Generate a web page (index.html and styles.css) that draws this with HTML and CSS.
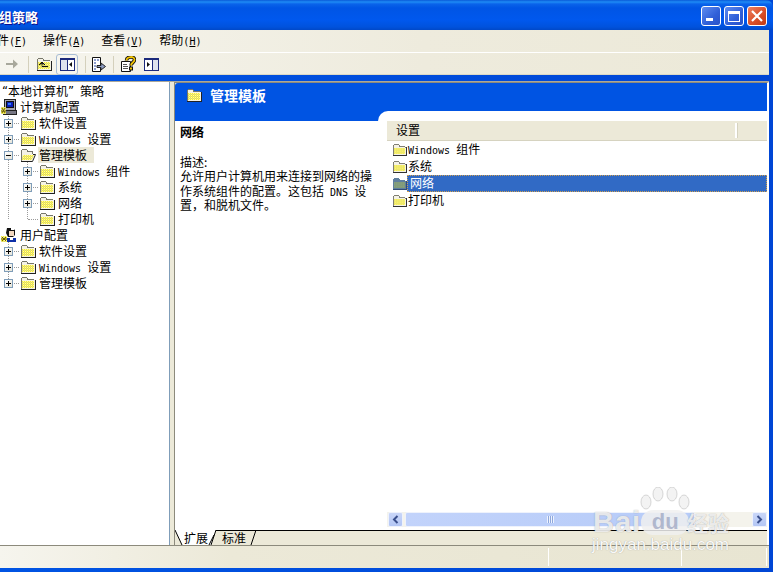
FILE: index.html
```html
<!DOCTYPE html>
<html lang="zh-CN">
<head>
<meta charset="utf-8">
<title>组策略</title>
<link rel="stylesheet" href="styles.css">
</head>
<body>
<svg class="defs" xmlns="http://www.w3.org/2000/svg">
  <defs>
    <pattern id="dither" width="2" height="2" patternUnits="userSpaceOnUse">
      <rect width="2" height="2" fill="#f6ee30"/>
      <rect width="1" height="1" fill="#d9d6a8"/>
      <rect x="1" y="1" width="1" height="1" fill="#fff9a0"/>
    </pattern>
    <pattern id="ditherSel" width="2" height="2" patternUnits="userSpaceOnUse">
      <rect width="2" height="2" fill="#7f9a78"/>
      <rect width="1" height="1" fill="#8fa585"/>
    </pattern>
    <symbol id="folder" viewBox="0 0 16 14">
      <path d="M1 3V2H2V1H7V2H8V3H14V4H15V13H1Z" fill="#f4f2e6" shape-rendering="crispEdges"/>
      <path d="M2 5H14V12H2Z" fill="url(#dither)" shape-rendering="crispEdges"/>
      <path d="M1.5 13V2.5L2.5 1.5H6.5L7.5 2.5V3.5H13.5L14.5 4.5" fill="none" stroke="#77776a" shape-rendering="crispEdges"/>
      <path d="M1 13.5H15.5M15.5 14V4" stroke="#222" fill="none" shape-rendering="crispEdges"/>
    </symbol>
    <symbol id="folderSel" viewBox="0 0 16 14">
      <path d="M1 3V2H2V1H7V2H8V3H14V4H15V13H1Z" fill="#5f7f9f" shape-rendering="crispEdges"/>
      <path d="M2 5H14V12H2Z" fill="url(#ditherSel)" shape-rendering="crispEdges"/>
      <path d="M1 13.5H15.5M15.5 14V4" stroke="#24406c" fill="none" shape-rendering="crispEdges"/>
    </symbol>
    <symbol id="folderOpen" viewBox="0 0 16 14">
      <path d="M1 12V2H2V1H7V2H8V3H13V6H15L12 13H2Z" fill="#f4f2e6" shape-rendering="crispEdges"/>
      <path d="M3 7H14L11.5 12H1.5Z" fill="url(#dither)"/>
      <path d="M1.5 13V2.5L2.5 1.5H6.5L7.5 2.5V3.5H12.5V6" fill="none" stroke="#77776a" shape-rendering="crispEdges"/>
      <path d="M1 13.5H12.5L15.5 6.5H13" stroke="#222" fill="none"/>
    </symbol>
    <symbol id="computer" viewBox="0 0 16 16">
      <rect x="3.5" y="0.5" width="11" height="11" fill="#a8a8b4" stroke="#222"/>
      <rect x="5.5" y="2.5" width="7" height="6" fill="#0a1fb8" stroke="#111"/>
      <rect x="7" y="4" width="3" height="2" fill="#2f7bff"/>
      <rect x="2.5" y="11.5" width="13" height="4" fill="#777784" stroke="#222"/>
      <path d="M0 8H5V15H0Z" fill="url(#dither)"/>
      <path d="M1 9L4 14M4 9L1 14M0 12H5" stroke="#6b5c00"/>
    </symbol>
    <symbol id="user" viewBox="0 0 16 16">
      <path d="M6 1H11L14 3V8L12 10H7L5 6Z" fill="#111"/>
      <rect x="8" y="4" width="5" height="5" fill="#f2d8c0"/>
      <rect x="10" y="1" width="3" height="2" fill="#fff"/>
      <path d="M5 11H15V15H5Z" fill="#0d2fa8"/>
      <rect x="9" y="10" width="3" height="3" fill="#fff"/>
      <path d="M0 9H6V15H0Z" fill="url(#dither)"/>
      <path d="M1 10L5 14M5 10L1 14M0 12H6" stroke="#6b5c00"/>
    </symbol>
  </defs>
</svg>

<div class="window">
  <header class="titlebar">
    <span class="title">组策略</span>
    <div class="controls">
      <span class="ctl ctl-blue"><svg width="20" height="20" viewBox="0 0 20 20"><rect x="5" y="12" width="7" height="3" fill="#fff"/></svg></span>
      <span class="ctl ctl-blue"><svg width="20" height="20" viewBox="0 0 20 20"><path d="M4.5 5.5H15.5V15.5H4.5Z" fill="none" stroke="#fff" shape-rendering="crispEdges"/><rect x="4" y="5" width="12" height="3" fill="#fff"/></svg></span>
      <span class="ctl ctl-red"><svg width="20" height="20" viewBox="0 0 20 20"><path d="M5 5L15 15M15 5L5 15" stroke="#fff" stroke-width="2.2"/></svg></span>
    </div>
  </header>

  <nav class="menubar">
    <span class="menu menu-first">文件<span class="lat">(<u>F</u>)</span></span>
    <span class="menu">操作<span class="lat">(<u>A</u>)</span></span>
    <span class="menu">查看<span class="lat">(<u>V</u>)</span></span>
    <span class="menu">帮助<span class="lat">(<u>H</u>)</span></span>
  </nav>

  <div class="toolbar">
    <span class="tool">
      <svg width="14" height="12" viewBox="0 0 14 12"><path d="M1 5H8V1.5L13 6L8 10.5V7H1Z" fill="#a8a89c"/></svg>
    </span>
    <span class="sep sep-a"></span>
    <span class="tool tool-up">
      <svg width="16" height="14" viewBox="0 0 16 14"><use href="#folder" width="16" height="14"/><path d="M3 8L6 5L9 8M6 8.5V9.5H12" fill="none" stroke="#111"/><path d="M4 7.5H8L6 5.5Z" fill="#111"/></svg>
    </span>
    <span class="tool tool-active">
      <svg width="15" height="13" viewBox="0 0 15 13"><rect x="0.5" y="0.5" width="14" height="12" fill="#fff" stroke="#1c2a7c"/><rect width="15" height="2" fill="#1c2a7c"/><rect x="7" y="0" width="1" height="13" fill="#1c2a7c"/><rect x="1" y="2" width="6" height="10" fill="#dfe3ee"/><path d="M12 4V9L9 6.5Z" fill="#111"/></svg>
    </span>
    <span class="sep sep-b"></span>
    <span class="tool tool-export">
      <svg width="15" height="15" viewBox="0 0 15 15"><path d="M1.5 .5H9.5V14.5H1.5Z" fill="#fff" stroke="#111"/><path d="M3 3H5M6 3H8M3 6H5M3 9H5M3 12H5" stroke="#1c3c9c"/><path d="M6 8.5H10V6L14.5 9.5L10 13V10.5H6Z" fill="#8d9cc2" stroke="#222"/></svg>
    </span>
    <span class="sep sep-c"></span>
    <span class="tool tool-help">
      <svg width="16" height="16" viewBox="0 0 16 16"><path d="M1.5 5.5H10.5V15.5H1.5Z" fill="#fff" stroke="#111"/><path d="M3 8.5H7M3 10.5H8M3 12.5H8" stroke="#555"/><path d="M6.5 4.5C6.5 .5 14.5 -.5 14.5 3.8C14.5 6.5 11 6.5 11 9.5" fill="none" stroke="#111" stroke-width="3.6"/><path d="M6.5 4.5C6.5 .5 14.5 -.5 14.5 3.8C14.5 6.5 11 6.5 11 9.5" fill="none" stroke="#f2c400" stroke-width="1.8"/><rect x="9.5" y="11" width="3" height="3" fill="#f2c400" stroke="#111"/></svg>
    </span>
    <span class="tool tool-view">
      <svg width="15" height="13" viewBox="0 0 15 13"><rect x="0.5" y="0.5" width="14" height="12" fill="#fff" stroke="#1c2a7c"/><rect width="15" height="2" fill="#1c2a7c"/><rect x="8" y="0" width="1" height="13" fill="#1c2a7c"/><rect x="9" y="2" width="5" height="10" fill="#dfe3ee"/><path d="M3 4V9L6 6.5Z" fill="#111"/></svg>
    </span>
  </div>

  <main class="main">
    <aside class="tree">
      <div class="row root-title"><span class="lat">“</span>本地计算机<span class="lat">” </span>策略</div>

      <div class="row root"><svg class="ico"><use href="#computer"/></svg><span class="lbl">计算机配置</span></div>
      <div class="group">
        <div class="row"><span class="exp plus"></span><svg class="ico"><use href="#folder"/></svg><span class="lbl">软件设置</span></div>
        <div class="row"><span class="exp plus"></span><svg class="ico"><use href="#folder"/></svg><span class="lbl"><span class="lat">Windows </span>设置</span></div>
        <div class="row"><span class="exp"></span><svg class="ico"><use href="#folderOpen"/></svg><span class="lbl lbl-cur">管理模板</span></div>
        <div class="group group-sub">
          <div class="row"><span class="exp plus"></span><svg class="ico"><use href="#folder"/></svg><span class="lbl"><span class="lat">Windows </span>组件</span></div>
          <div class="row"><span class="exp plus"></span><svg class="ico"><use href="#folder"/></svg><span class="lbl">系统</span></div>
          <div class="row"><span class="exp plus"></span><svg class="ico"><use href="#folder"/></svg><span class="lbl">网络</span></div>
          <div class="row"><span class="exp none"></span><svg class="ico"><use href="#folder"/></svg><span class="lbl">打印机</span></div>
        </div>
      </div>

      <div class="row root"><svg class="ico"><use href="#user"/></svg><span class="lbl">用户配置</span></div>
      <div class="group">
        <div class="row"><span class="exp plus"></span><svg class="ico"><use href="#folder"/></svg><span class="lbl">软件设置</span></div>
        <div class="row"><span class="exp plus"></span><svg class="ico"><use href="#folder"/></svg><span class="lbl"><span class="lat">Windows </span>设置</span></div>
        <div class="row"><span class="exp plus"></span><svg class="ico"><use href="#folder"/></svg><span class="lbl">管理模板</span></div>
      </div>
    </aside>

    <section class="pane">
      <div class="pane-head">
        <svg class="ico"><use href="#folder"/></svg>
        <h1 class="pane-title">管理模板</h1>
      </div>
      <div class="pane-body">
        <div class="desc">
          <h2 class="desc-name">网络</h2>
          <p class="desc-text">描述:<br>允许用户计算机用来连接到网络的操作系统组件的配置。这包括<span class="lat"> DNS </span>设置，和脱机文件。</p>
        </div>
        <div class="listcol">
          <div class="list-head"><span class="col-name">设置</span></div>
          <div class="items">
            <div class="item"><svg class="ico"><use href="#folder"/></svg><span class="item-lbl"><span class="lat">Windows </span>组件</span></div>
            <div class="item"><svg class="ico"><use href="#folder"/></svg><span class="item-lbl">系统</span></div>
            <div class="item"><svg class="ico"><use href="#folderSel"/></svg><span class="item-lbl item-sel">网络</span></div>
            <div class="item"><svg class="ico"><use href="#folder"/></svg><span class="item-lbl">打印机</span></div>
          </div>
          <div class="hscroll">
            <span class="sb-btn"><svg width="9" height="9" viewBox="0 0 9 9"><path d="M6.5 1L3 4.5L6.5 8" fill="none" stroke="#3a4f8c" stroke-width="2"/></svg></span>
            <span class="sb-thumb"><span class="grip"></span></span>
            <span class="sb-track"></span>
            <span class="sb-btn"><svg width="9" height="9" viewBox="0 0 9 9"><path d="M2.5 1L6 4.5L2.5 8" fill="none" stroke="#3a4f8c" stroke-width="2"/></svg></span>
          </div>
        </div>
      </div>
      <div class="tabs">
        <svg class="tabs-art" width="592" height="15" viewBox="0 0 592 15">
          <path d="M0 0H41L36 15H7Z" fill="#fff"/>
          <path d="M0 0L7 15M41 0L36 15" fill="none" stroke="#000"/>
          <path d="M41 .5H81M81 0L76 15M34 15L39 5" fill="none" stroke="#000"/>
          <path d="M81 .5H592" stroke="#000" fill="none"/>
        </svg>
        <span class="tab tab-on">扩展</span>
        <span class="tab">标准</span>
      </div>
    </section>
  </main>

  <footer class="status">
    <span class="st st-a"></span>
    <span class="st st-b"></span>
    <span class="st st-c"></span>
  </footer>

  <div class="watermark">
    <svg class="paw" width="62" height="32" viewBox="0 0 62 32">
      <ellipse cx="12" cy="15" rx="5" ry="7" />
      <ellipse cx="24" cy="7" rx="5" ry="7" />
      <ellipse cx="38" cy="7" rx="5" ry="7" />
      <ellipse cx="50" cy="15" rx="5" ry="7" />
    </svg>
    <div class="wm-line"><span class="wm-bai">Bai</span><span class="wm-du">du</span><span class="wm-jy">经验</span></div>
    <div class="wm-url">jingyan.baidu.com</div>
  </div>
</div>
</body>
</html>
```

FILE: styles.css
```css
* { box-sizing: border-box; }
html, body { margin: 0; padding: 0; }
body {
  width: 773px;
  height: 572px;
  overflow: hidden;
  font-family: "Noto Sans CJK SC", "Liberation Sans", sans-serif;
  font-size: 12px;
  color: #000;
  background: #fff;
}
.defs { display: block; width: 0; height: 0; position: absolute; }
.lat { font-family: "DejaVu Sans Mono", monospace; font-size: 10px; line-height: 0; white-space: pre; }
u { text-decoration: underline; }

.window {
  position: relative;
  width: 773px;
  height: 572px;
  display: flex;
  flex-direction: column;
  padding: 0 4px 4px 0;
  overflow: hidden;
  background: linear-gradient(90deg, #0054e3, #0046d5);
}

/* title bar */
.titlebar {
  flex: none;
  height: 30px;
  margin-right: -4px;
  padding: 2px 6px 0 0;
  display: flex;
  align-items: center;
  justify-content: space-between;
  border-top-right-radius: 7px;
  background: linear-gradient(#0a5ad8 0, #1e8bf5 2px, #0a63ea 4px, #0055e5 8px, #0058ee 20px, #0052dc 27px, #0048c8 30px);
}
.title {
  margin-left: -1px;
  padding-top: 2px;
  font-size: 13px;
  font-weight: 700;
  color: #fff;
  text-shadow: 1px 1px 0 #0f1089;
  line-height: 20px;
}
.controls { display: flex; gap: 3px; }
.ctl {
  display: block;
  width: 20px;
  height: 20px;
  border: 1px solid #fff;
  border-radius: 3px;
  overflow: hidden;
}
.ctl svg { display: block; margin: -1px; }
.ctl-blue { background: linear-gradient(135deg, #5f8cf0, #2f5fd8 60%, #2a52c8); }
.ctl-red { background: linear-gradient(135deg, #ee8060, #d9502a 55%, #c23a14); }

/* menu */
.menubar {
  flex: none;
  height: 23px;
  padding-bottom: 2px;
  display: flex;
  align-items: center;
  border-bottom: 1px solid #fff;
  background: linear-gradient(90deg, #f6f5ee, #eeebdd 55%, #ece9d8);
  line-height: 20px;
}
.menu { margin-right: 16px; white-space: nowrap; }
.menu-first { margin-left: -15px; }

/* toolbar */
.toolbar {
  flex: none;
  height: 22px;
  display: flex;
  align-items: center;
  padding-left: 1px;
  background: linear-gradient(90deg, #f6f5ee, #eeebdd 55%, #ece9d8);
  box-shadow: inset 0 -1px 0 #dcd9c6;
}
.tool {
  flex: none;
  width: 22px;
  height: 21px;
  display: flex;
  align-items: center;
  justify-content: center;
}
.tool-active {
  margin-left: 1px;
  background: #f7f6ef;
  border: 1px solid #a8bcd4;
  border-radius: 3px;
}
.tool-export { margin-left: 1px; }
.tool-help { margin-left: 3px; }
.tool-view { margin-left: 1px; }
.sep { flex: none; width: 1px; height: 17px; background: #d4d0bc; }
.sep-a { margin: 0 4px 0 5px; }
.sep-b { margin: 0 0 0 7px; }
.sep-c { margin: 0 0 0 4px; }

/* main */
.main {
  flex: 1;
  min-height: 0;
  display: flex;
  margin-top: 7px;
  background: #ece9d8;
  box-shadow: 0 -1px 0 #aca899;
  border-bottom: 1px solid #8c8a7c;
}
.tree {
  flex: none;
  width: 170px;
  padding-top: 1px;
  background: #fff;
  border-right: 1px solid #7f9db9;
}
.row {
  position: relative;
  height: 16px;
  display: flex;
  align-items: center;
  white-space: nowrap;
  line-height: 16px;
}
.root-title { padding-left: 2px; }
.root { padding-left: 1px; }
.ico { flex: none; width: 16px; height: 14px; overflow: visible; }
.root .ico { height: 16px; }
.lbl { margin-left: 3px; }
.root .lbl { margin-left: 3px; }
.lbl-cur { margin-left: 2px; padding: 0 7px 0 1px; background: #ece9d8; }

.group { position: relative; }
.group::before {
  content: "";
  position: absolute;
  left: 8px;
  top: -2px;
  bottom: 8px;
  border-left: 1px dotted #9a9a9a;
}
.group > .row { padding-left: 4px; }
.group > .row::before {
  content: "";
  position: absolute;
  left: 9px;
  width: 10px;
  top: 8px;
  border-top: 1px dotted #9a9a9a;
}
.group-sub::before { left: 27px; top: -8px; }
.group-sub > .row { padding-left: 23px; }
.group-sub > .row::before { left: 28px; }
.exp {
  position: relative;
  z-index: 1;
  flex: none;
  width: 9px;
  height: 9px;
  margin-right: 7px;
  border: 1px solid #7f9db9;
  background:
    linear-gradient(#000, #000) center / 5px 1px no-repeat,
    linear-gradient(135deg, #fff, #e6e4d8);
}
.exp.plus {
  background:
    linear-gradient(#000, #000) center / 5px 1px no-repeat,
    linear-gradient(#000, #000) center / 1px 5px no-repeat,
    linear-gradient(135deg, #fff, #e6e4d8);
}
.exp.none { visibility: hidden; }
.row .ico { position: relative; z-index: 1; }

/* right pane */
.pane {
  flex: 1;
  min-width: 0;
  margin-left: 4px;
  display: flex;
  flex-direction: column;
  border-left: 1px solid #8c8a7c;
  border-right: 2px solid #fff;
  border-top: 1px solid #8c8a7c;
}
.pane-head {
  flex: none;
  height: 28px;
  display: flex;
  align-items: center;
  padding: 0 0 4px 11px;
  background: #0054e3;
  border-top-left-radius: 3px;
}
.pane-title {
  margin: 0 0 0 8px;
  font-size: 14px;
  font-weight: 700;
  color: #fff;
  line-height: 24px;
}
.pane-body {
  flex: 1;
  min-height: 0;
  display: flex;
  background: linear-gradient(#0054e3 10px, #fff 10px);
}
.desc { flex: none; width: 203px; padding: 10px 0 0 5px; }
.desc-name { margin: 3px 0 0; font-size: 12px; font-weight: 700; line-height: 15px; }
.desc-text { margin: 16px 0 0; width: 197px; line-height: 14.4px; }
.listcol {
  flex: 1;
  min-width: 0;
  display: flex;
  flex-direction: column;
  padding: 10px 0 3px 9px;
  background: #fff;
  border-top-left-radius: 10px;
}
.list-head {
  flex: none;
  height: 20px;
  display: flex;
  align-items: center;
  background: #ece9d8;
  border-bottom: 1px solid #d6d3c0;
}
.col-name {
  width: 350px;
  padding: 0 0 1px 9px;
  line-height: 14px;
  border-right: 2px solid #fff;
  box-shadow: 1px 0 0 #d6d3c0;
}
.items { flex: 1; min-height: 0; }
.item {
  height: 17px;
  display: flex;
  align-items: center;
  padding-left: 5px;
  line-height: 15px;
}
.item .ico { width: 15px; height: 13px; }
.item-lbl { margin-left: 1px; padding: 0 0 2px; }
.item-sel {
  flex: 1;
  margin-left: 0;
  height: 17px;
  padding-left: 3px;
  color: #fff;
  background: #316ac5;
  outline: 1px dotted #d0a050;
  outline-offset: -1px;
}

.hscroll {
  flex: none;
  height: 15px;
  display: flex;
  gap: 1px;
  padding-left: 1px;
  background: #f4f3ec;
}
.sb-btn {
  flex: none;
  width: 15px;
  height: 15px;
  display: flex;
  align-items: center;
  justify-content: center;
  border: 1px solid #eef2fc;
  border-radius: 2px;
  background: linear-gradient(#c9d6f8, #b4c7f5);
}
.sb-thumb {
  flex: none;
  width: 290px;
  margin-left: 1px;
  display: flex;
  align-items: center;
  justify-content: center;
  border: 1px solid #eef2fc;
  border-radius: 2px;
  background: linear-gradient(90deg, #c2d3fb, #b6cbf8);
}
.grip {
  width: 7px;
  height: 7px;
  background: repeating-linear-gradient(90deg, #eef3ff 0 1px, #8fa8dc 1px 2px);
}
.sb-track { flex: 1; }

.tabs {
  position: relative;
  flex: none;
  height: 15px;
  display: flex;
  background: #ece9d8;
}
.tabs-art { position: absolute; left: 0; top: 0; display: block; }
.tab { position: relative; width: 40px; line-height: 15px; text-align: left; }
.tab-on { margin-left: 9px; width: 38px; }

/* status */
.status {
  flex: none;
  height: 22px;
  display: flex;
  padding: 2px 0 2px 0;
  background: linear-gradient(90deg, #f6f5ee, #ece9d8 30%, #e8e5d2);
}
.st { display: block; border-right: 1px solid #fff; }
.st-a { width: 549px; }
.st-b { width: 133px; }
.st-c { width: 85px; }

/* watermark */
.watermark {
  position: absolute;
  left: 590px;
  top: 487px;
  width: 145px;
  height: 70px;
  color: rgba(255, 255, 255, .8);
  pointer-events: none;
}
.paw { display: block; margin-left: 44px; fill: rgba(240, 240, 240, .8); stroke: rgba(170, 170, 170, .45); }
.wm-line {
  margin-top: -12px;
  display: flex;
  align-items: center;
  height: 30px;
  white-space: nowrap;
  text-shadow: 0 0 1px rgba(120, 120, 120, .7);
}
.wm-bai { margin-left: 3px; font: 700 29px/30px "Liberation Sans", sans-serif; letter-spacing: 1px; }
.wm-du {
  width: 48px;
  height: 25px;
  text-align: center;
  font: 700 22px/24px "Liberation Sans", sans-serif;
  color: rgba(150, 160, 190, .7);
  background: rgba(240, 240, 240, .85);
  border-radius: 12px;
  text-shadow: none;
}
.wm-jy { margin-left: -2px; font-size: 21px; font-weight: 700; line-height: 30px; }
.wm-url {
  margin: -1px 0 0 2px;
  font: 400 17px/18px "Liberation Sans", sans-serif;
  white-space: nowrap;
  color: rgba(255, 255, 255, .95);
  text-shadow: 0 0 1px rgba(120, 120, 120, .7);
}
```
